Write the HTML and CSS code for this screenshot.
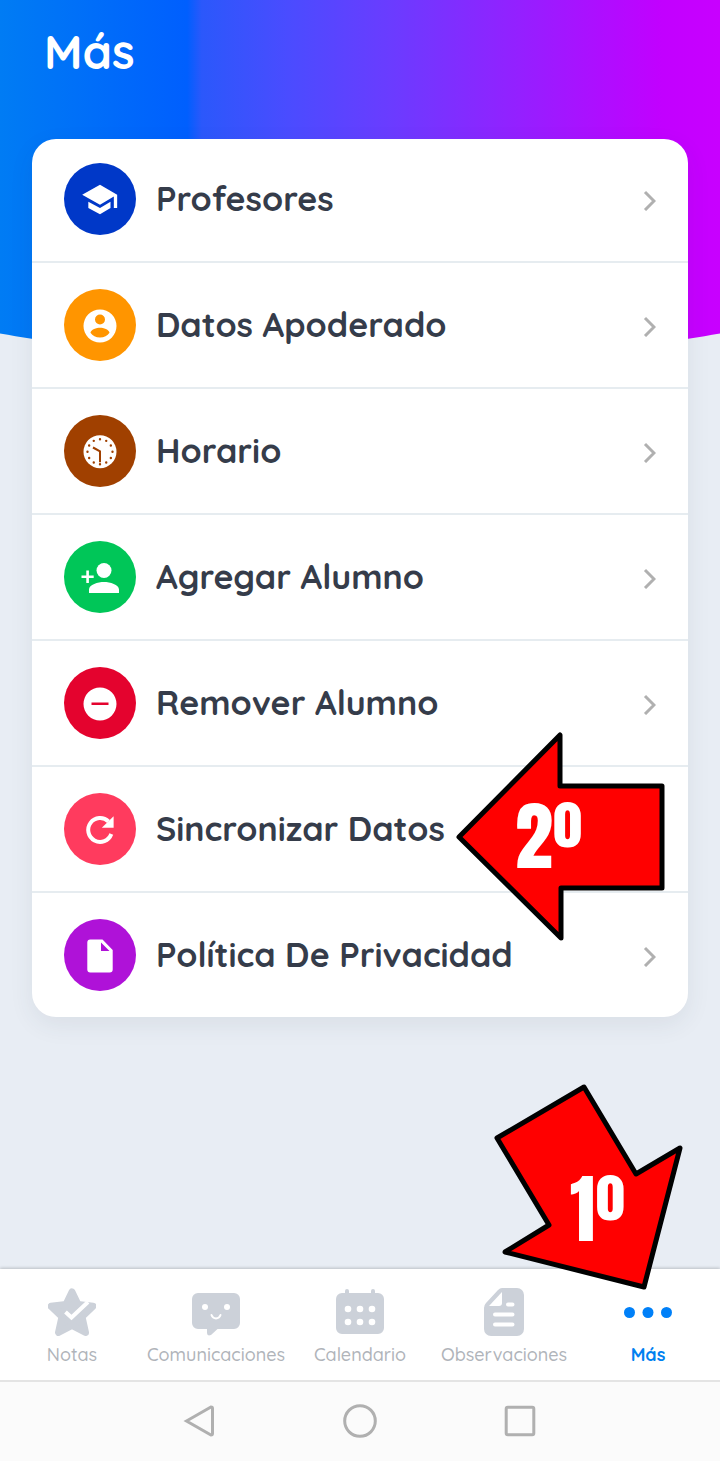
FILE: index.html
```html
<!DOCTYPE html>
<html lang="es">
<head>
<meta charset="utf-8">
<meta name="viewport" content="width=device-width, initial-scale=1">
<title>Más</title>
<link rel="stylesheet" href="styles.css">
</head>
<body>
<div class="screen">
  <div class="backdrop"></div>
  <header class="header"><h1 class="title">Más</h1></header>

  <main class="content">
    <ul class="menu">
      <li class="menu-item">
        <a class="menu-link" href="#profesores">
          <span class="badge badge-blue"><svg viewBox="0 0 24 24"><path d="M5 13.600v3.800L12 21.200l6.300-3.800v-3.800l-6.300 3.800zM12 3.400L1.300 9.400l10.700 6 8.300-4.900v6.900h2v-8z"/></svg></span>
          <span class="label">Profesores</span>
          <svg class="chevron" viewBox="0 0 14 24"><path d="M3 5l9 9-9 9"/></svg>
        </a>
      </li>
      <li class="menu-item">
        <a class="menu-link" href="#apoderado">
          <span class="badge badge-orange"><svg viewBox="0 0 40 40"><path fill-rule="evenodd" d="M20 4.500a16.500 16.500 0 1 0 0 33 16.500 16.500 0 0 0 0-33zM20 9.500a5 5 0 1 1 0 10 5 5 0 0 1 0-10zM20 32.500c-4.200 0-7.500-1.700-9.500-4.700.1-3.300 6.200-5.100 9.500-5.100s9.400 1.800 9.500 5.100c-2 3-5.300 4.700-9.500 4.700z"/></svg></span>
          <span class="label">Datos Apoderado</span>
          <svg class="chevron" viewBox="0 0 14 24"><path d="M3 5l9 9-9 9"/></svg>
        </a>
      </li>
      <li class="menu-item">
        <a class="menu-link" href="#horario">
          <span class="badge badge-brown"><svg viewBox="0 0 40 40"><circle cx="20" cy="20.700" r="16.500"/><circle class="ticks" cx="20" cy="20.700" r="12.500" pathLength="120"/><path class="hands" d="M13 16.500l7 3.800v11"/></svg></span>
          <span class="label">Horario</span>
          <svg class="chevron" viewBox="0 0 14 24"><path d="M3 5l9 9-9 9"/></svg>
        </a>
      </li>
      <li class="menu-item">
        <a class="menu-link" href="#agregar">
          <span class="badge badge-green"><svg viewBox="0 0 40 40"><circle cx="24" cy="13.500" r="7.500"/><path d="M9 36v-3.500c0-5 9-7.500 15-7.500s15 2.500 15 7.500V36zM6.300 13.500h2.600v5h4.800V21H8.900v5H6.300v-5H1.500v-2.500h4.800z"/></svg></span>
          <span class="label">Agregar Alumno</span>
          <svg class="chevron" viewBox="0 0 14 24"><path d="M3 5l9 9-9 9"/></svg>
        </a>
      </li>
      <li class="menu-item">
        <a class="menu-link" href="#remover">
          <span class="badge badge-red"><svg viewBox="0 0 40 40"><path fill-rule="evenodd" d="M20 4.500a16.500 16.500 0 1 0 0 33 16.500 16.500 0 0 0 0-33zM11.500 19.500h17v2.600h-17z"/></svg></span>
          <span class="label">Remover Alumno</span>
          <svg class="chevron" viewBox="0 0 14 24"><path d="M3 5l9 9-9 9"/></svg>
        </a>
      </li>
      <li class="menu-item">
        <a class="menu-link" href="#sincronizar">
          <span class="badge badge-pink"><svg viewBox="0 0 40 40"><path class="loop" d="M28.500 12.500A11.900 11.900 0 1 0 31.300 25"/><path d="M33.600 7.300v11.400H21.800z"/></svg></span>
          <span class="label">Sincronizar Datos</span>
        </a>
        <svg class="arrow arrow-second" viewBox="0 0 212 212" role="img" aria-label="2º">
          <path d="M104 4v51h102v102H105v50L3 106z"/>
          <text x="59" y="137">2<tspan dy="9">º</tspan></text>
        </svg>
      </li>
      <li class="menu-item">
        <a class="menu-link" href="#privacidad">
          <span class="badge badge-purple"><svg viewBox="0 0 40 40"><path fill-rule="evenodd" d="M10 4.500h12.500L32.700 15v19.500a3 3 0 0 1-3 3H10.300a3 3 0 0 1-3-3v-27a3 3 0 0 1 3-3zM21 7.500V16h8.500z"/></svg></span>
          <span class="label">Política De Privacidad</span>
          <svg class="chevron" viewBox="0 0 14 24"><path d="M3 5l9 9-9 9"/></svg>
        </a>
      </li>
    </ul>
  </main>

  <nav class="tabs">
    <a class="tab" href="#notas">
      <svg viewBox="0 0 48 48"><path class="star" d="M24 4l6 12.500 15 1.800-11 10.500 3.500 15.700L24 37.500l-13.500 7L14 28.800 3 18.300l15-1.800z"/><path class="check" d="M17.500 24l6 5.500L40 14"/></svg>
      <span>Notas</span>
    </a>
    <a class="tab" href="#comunicaciones">
      <svg viewBox="0 0 48 48"><path d="M6 5h36a6 6 0 0 1 6 6v24a6 6 0 0 1-6 6H25.500l-6.500 6q-4 1.500-4-2v-4H6a6 6 0 0 1-6-6V11a6 6 0 0 1 6-6z"/><circle class="hole" cx="13" cy="19" r="3"/><circle class="hole" cx="35" cy="19" r="3"/><path class="smile" d="M19.500 27c1.500 4.500 7.500 4.500 9 0"/></svg>
      <span>Comunicaciones</span>
    </a>
    <a class="tab" href="#calendario">
      <svg viewBox="0 0 48 48"><path d="M6 5h3V3a2 2 0 0 1 4 0v2h22V3a2 2 0 0 1 4 0v2h3a6 6 0 0 1 6 6v29a6 6 0 0 1-6 6H6a6 6 0 0 1-6-6V11a6 6 0 0 1 6-6z"/><g class="hole"><circle cx="12" cy="21" r="3.300"/><circle cx="24" cy="21" r="3.300"/><circle cx="36" cy="21" r="3.300"/><circle cx="12" cy="34" r="3.300"/><circle cx="24" cy="34" r="3.300"/><circle cx="36" cy="34" r="3.300"/></g></svg>
      <span>Calendario</span>
    </a>
    <a class="tab" href="#observaciones">
      <svg viewBox="0 0 48 48"><path d="M22 0h15a7 7 0 0 1 7 7v34a7 7 0 0 1-7 7H11a7 7 0 0 1-7-7V20q0-3 2-5L18 2q2-2 4-2z"/><path class="hole" d="M22 4v11q0 3-3 3H9z"/><path class="lines" d="M28 16.500h4.500M15 26.500h17.500M15 36.500h17.500"/></svg>
      <span>Observaciones</span>
    </a>
    <a class="tab tab-active" href="#mas" aria-current="page">
      <svg viewBox="0 0 48 48"><circle cx="5.500" cy="24.500" r="5.500"/><circle cx="24" cy="24.500" r="5.500"/><circle cx="42.500" cy="24.500" r="5.500"/></svg>
      <span>Más</span>
    </a>
    <svg class="arrow arrow-first" viewBox="0 0 190 210" role="img" aria-label="1º">
      <path d="M90 5l52 87 44-26-36 139L11 170l44-27L3 56z"/>
      <text x="76" y="159">1<tspan dy="9">º</tspan></text>
    </svg>
  </nav>

  <footer class="system">
    <button class="key" type="button" aria-label="Atrás"><svg viewBox="0 0 34 34"><path d="M3.500 17L28 3q1.500 0 1.500 1.500v25q0 1.500-1.500 1.500z"/></svg></button>
    <button class="key" type="button" aria-label="Inicio"><svg viewBox="0 0 34 34"><circle cx="17" cy="17" r="15.300"/></svg></button>
    <button class="key" type="button" aria-label="Recientes"><svg viewBox="0 0 34 34"><rect x="3.200" y="3.200" width="27.600" height="27.600" rx="1.500"/></svg></button>
  </footer>
</div>
</body>
</html>
```
FILE: styles.css
```css
* { box-sizing: border-box; }

body {
  margin: 0;
  font-family: Quicksand, Inter, "Open Sans", sans-serif;
  color: #353c4a;
}

a { color: inherit; text-decoration: none; }

.screen {
  position: relative;
  display: flex;
  flex-direction: column;
  min-height: 100vh;
  background: #e8edf4;
}

/* Curved gradient behind the heading and the top of the card */
.backdrop {
  position: absolute;
  top: 0;
  left: 0;
  right: 0;
  height: 364px;
  background: linear-gradient(90deg, #007cf4 0%, #005ffe 26%, #2b58fb 28%, #4a4cff 40%, #6a3cff 54%, #9420ff 72%, #c200ff 92%, #c800ff 100%);
  clip-path: ellipse(125% 100% at 50% 0);
}

.header { position: relative; padding: 24px 44px 0; }

.title {
  margin: 0;
  font-size: 47px;
  line-height: 56px;
  font-weight: 700;
  color: #fff;
}

.content { position: relative; flex: 1; padding: 59px 32px 24px; }

.menu {
  margin: 0;
  padding: 0;
  list-style: none;
  background: #fff;
  border-radius: 24px;
  box-shadow: 0 8px 24px rgba(50, 70, 80, 0.08);
}

.menu-item { position: relative; border-bottom: 2px solid #e6ecf0; }
.menu-item:last-child { border-bottom: 0; }

.menu-link {
  display: flex;
  align-items: center;
  gap: 20px;
  padding: 26px 32px;
}
.menu-item:first-child .menu-link { padding-top: 24px; }

.badge {
  display: flex;
  align-items: center;
  justify-content: center;
  flex: none;
  width: 72px;
  height: 72px;
  border-radius: 50%;
}
.badge svg { width: 40px; height: 40px; fill: #fff; }

.badge-blue { background: #0038c8; }
.badge-orange { background: #ff9500; }
.badge-brown { background: #a04000; }
.badge-green { background: #00c658; }
.badge-red { background: #e4032e; }
.badge-pink { background: #ff3b5e; }
.badge-purple { background: #af12d8; }

.badge .ticks { fill: none; stroke: #a04000; stroke-width: 2.4; stroke-linecap: round; stroke-dasharray: 0 10; }
.badge .hands { fill: none; stroke: #a04000; stroke-width: 2; }
.badge .loop { fill: none; stroke: #fff; stroke-width: 4; }

.label { flex: 1; font-size: 34px; line-height: 40px; font-weight: 700; white-space: nowrap; }

.chevron { flex: none; width: 14px; height: 24px; fill: none; stroke: #b0b0b0; stroke-width: 3; }

.arrow { position: absolute; z-index: 2; pointer-events: none; }
.arrow path { fill: #f00; stroke: #000; stroke-width: 5; stroke-linejoin: round; }
.arrow text {
  fill: #fff;
  font-family: Anton, "League Gothic", "Bebas Neue", Oswald, Impact, "Liberation Sans Narrow", "DejaVu Sans Condensed", sans-serif;
  font-size: 76px;
}
.arrow-second { top: -36px; right: 20px; width: 212px; height: 212px; }
.arrow-first { top: -187px; right: 36px; width: 190px; height: 210px; }

.tabs {
  position: relative;
  display: grid;
  grid-template-columns: repeat(5, 1fr);
  padding: 19px 0 13px;
  background: #fff;
  box-shadow: 0 -1px 3px rgba(0, 0, 0, 0.2);
}

.tab {
  display: flex;
  flex-direction: column;
  align-items: center;
  gap: 7px;
  font-size: 18px;
  line-height: 24px;
  font-weight: 500;
  color: #b0b4ba;
}
.tab svg { width: 48px; height: 48px; fill: #ccd1d9; }
.tab .hole { fill: #fff; }
.tab .star { stroke: #ccd1d9; stroke-width: 7; stroke-linejoin: round; }
.tab .check { fill: none; stroke: #fff; stroke-width: 4; }
.tab .smile { fill: none; stroke: #fff; stroke-width: 2; stroke-linecap: round; }
.tab .lines { fill: none; stroke: #fff; stroke-width: 4; stroke-linecap: round; }

.tab-active { color: #0080f0; font-weight: 700; }
.tab-active svg { fill: #0080f8; }

.system {
  position: relative;
  display: flex;
  justify-content: center;
  gap: 126px;
  padding: 22px 0 23px;
  background: #fbfbfb;
  border-top: 2px solid #e4e4e4;
}

.key { display: block; padding: 0; border: 0; background: none; }
.key svg { display: block; width: 34px; height: 34px; fill: none; stroke: #b0b0b0; stroke-width: 3; }
```
